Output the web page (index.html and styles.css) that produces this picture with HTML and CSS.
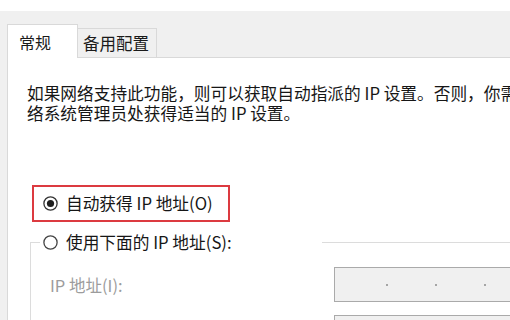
FILE: index.html
```html
<!DOCTYPE html>
<html lang="zh-CN">
<head>
<meta charset="utf-8">
<title>IPv4 属性</title>
<link rel="stylesheet" href="styles.css">
</head>
<body>
<div class="topbar"></div>
<div class="dialog">
  <div class="tabs">
    <div class="tab active">常规</div>
    <div class="tab">备用配置</div>
  </div>
  <div class="panel">
    <p class="intro">
      <span class="line">如果网络支持此功能，则可以获取自动指派的 IP 设置。否则，你需要从网</span>
      <span class="line">络系统管理员处获得适当的 IP 设置。</span>
    </p>
    <div class="highlight">
      <label class="radio">
        <svg class="radio-icon" width="15" height="15" viewBox="0 0 15 15"><circle cx="7.5" cy="7.5" r="6.6" fill="#fff" stroke="#333" stroke-width="1.3"/><circle cx="7.5" cy="7.5" r="3.6" fill="#1e1e1e"/></svg>
        <span>自动获得 IP 地址(O)</span>
      </label>
    </div>
    <fieldset class="group">
      <legend class="radio legend">
        <svg class="radio-icon" width="15" height="15" viewBox="0 0 15 15"><circle cx="7.5" cy="7.5" r="6.6" fill="#fff" stroke="#444" stroke-width="1.3"/></svg>
        <span>使用下面的 IP 地址(S):</span>
      </legend>
      <div class="field">
        <span class="field-label">IP 地址(I):</span>
        <div class="ipbox">
          <span class="seg"></span><span class="dot"></span>
          <span class="seg"></span><span class="dot"></span>
          <span class="seg"></span><span class="dot"></span>
          <span class="seg"></span>
        </div>
      </div>
      <div class="field">
        <span class="field-label"></span>
        <div class="ipbox">
          <span class="seg"></span><span class="dot"></span>
          <span class="seg"></span><span class="dot"></span>
          <span class="seg"></span><span class="dot"></span>
          <span class="seg"></span>
        </div>
      </div>
    </fieldset>
  </div>
</div>
</body>
</html>
```

FILE: styles.css
```css
html, body {
  margin: 0;
  padding: 0;
}
body {
  width: 510px;
  height: 320px;
  overflow: hidden;
  background: #ffffff;
  font-family: "Noto Sans CJK SC", sans-serif;
  font-size: 16.5px;
  color: #161616;
}
.topbar {
  height: 11px;
  background: #ffffff;
}
.dialog {
  width: 640px;
  background: #f0f0f0;
  padding-left: 7px;
  height: 320px;
}
.tabs {
  height: 46px;
  border-bottom: 1px solid #d9d9d9;
  display: flex;
  align-items: flex-end;
}
.tab {
  box-sizing: border-box;
  height: 29px;
  width: 79px;
  padding-left: 5px;
  border: 1px solid #d9d9d9;
  border-left: none;
  border-bottom: none;
  background: #f0f0f0;
  font-size: 16.5px;
  line-height: 29px;
  color: #1a1a1a;
}
.tab.active {
  height: 34px;
  width: 71px;
  padding-left: 11px;
  margin-bottom: -1px;
  border-left: 1px solid #d9d9d9;
  background: #ffffff;
  line-height: 34px;
  font-size: 16px;
}
.panel {
  background: #ffffff;
  border-left: 1px solid #d9d9d9;
  padding: 25px 0 0 19px;
  height: 300px;
}
.intro {
  margin: 0;
  line-height: 20px;
  white-space: nowrap;
  font-size: 16.7px;
}
.intro .line {
  display: block;
}
.highlight {
  box-sizing: border-box;
  margin: 62px 0 0 5px;
  width: 198px;
  height: 37px;
  border: 2px solid #dc3a40;
  display: flex;
  align-items: center;
  padding-left: 9px;
}
.radio {
  display: flex;
  align-items: center;
  gap: 8px;
  line-height: 21px;
  white-space: nowrap;
  font-size: 16.7px;
}
.radio-icon {
  flex: none;
}
.group {
  box-sizing: border-box;
  margin: 10px 0 0 3px;
  padding: 0 0 0 9px;
  width: 600px;
  border: 1px solid #dcdcdc;
  border-right: none;
  border-bottom: none;
  min-inline-size: 0;
}
.legend {
  box-sizing: border-box;
  width: 282px;
  padding: 0 0 0 3px;
}
.field {
  display: grid;
  grid-template-columns: 284px 260px;
  align-items: center;
  padding-left: 10px;
  margin-top: 14px;
}
.field + .field {
  margin-top: 13px;
}
.field-label {
  color: #9c9c9c;
  white-space: nowrap;
}
.ipbox {
  box-sizing: border-box;
  height: 35px;
  border: 1px solid #aaaaaa;
  background: #f0f0f0;
  display: flex;
  align-items: center;
  padding-left: 4px;
}
.seg {
  width: 47px;
}
.dot {
  width: 2px;
  height: 2px;
  border-radius: 50%;
  background: #8c8c8c;
}
```
